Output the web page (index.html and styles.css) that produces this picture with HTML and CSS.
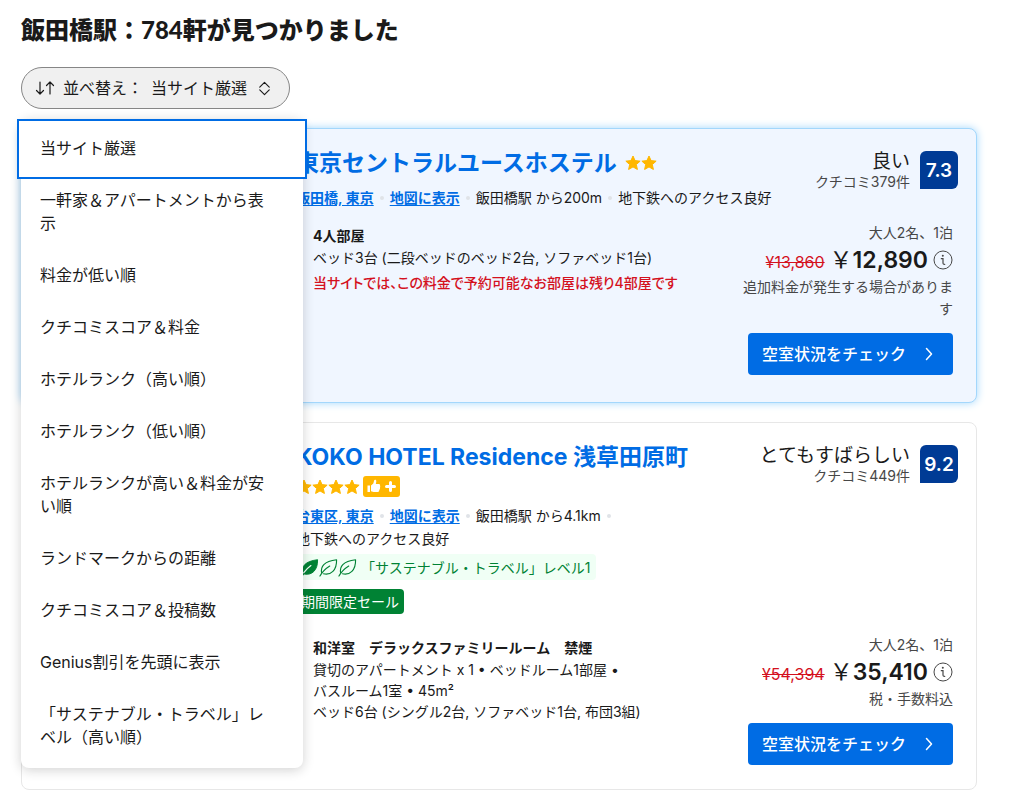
FILE: index.html
```html
<!DOCTYPE html>
<html lang="ja">
<head>
<meta charset="utf-8">
<meta name="viewport" content="width=device-width, initial-scale=1">
<title>飯田橋駅の宿泊施設</title>
<link rel="stylesheet" href="styles.css">
</head>
<body>
<svg class="sprite" aria-hidden="true">
  <symbol id="star" viewBox="0 0 24 24"><path d="M12 1.5l3.1 6.9 7.6.8-5.7 5.1 1.6 7.4L12 17.9l-6.6 3.8L7 14.3 1.300 9.200l7.600-.8z" fill="#ffb700" stroke="#ffb700" stroke-width="1.500" stroke-linejoin="round"/></symbol>
  <symbol id="info" viewBox="0 0 20 20"><circle cx="10" cy="10" r="9" fill="none" stroke="#474747" stroke-width="1"/><circle cx="9.800" cy="5.800" r="1" fill="#474747"/><path d="M8.300 8.700h1.700v4.600c0 .8.600 1.100 1.700 1.100" fill="none" stroke="#474747" stroke-width="1.200" stroke-linecap="round"/></symbol>
  <symbol id="chevron" viewBox="0 0 20 20"><path d="M7.500 4.500l5 5.500-5 5.500" fill="none" stroke="currentColor" stroke-width="1.500" stroke-linecap="round" stroke-linejoin="round"/></symbol>
  <symbol id="leaf" viewBox="0 0 20 20"><path d="M2.800 15.800C1.500 9 5 3.500 18.500 1.800 18.800 13 12.500 18.300 4.800 16.600M1 19c2-3.500 5-7.200 10.300-10.500" fill="none" stroke="#008234" stroke-width="1.200" stroke-linecap="round" stroke-linejoin="round"/></symbol>
  <symbol id="leaf-full" viewBox="0 0 20 20"><path d="M2.800 15.800C1.500 9 5 3.500 18.500 1.800 18.800 13 12.500 18.300 4.800 16.900L1.500 19z" fill="#008234" stroke="#008234" stroke-width="1" stroke-linejoin="round"/><path d="M4 15.500c2-2.800 4-5 7.500-7.500" fill="none" stroke="#f0fff5" stroke-width="1.300" stroke-linecap="round"/></symbol>
</svg>
<main class="page">
  <h1 class="heading">飯田橋駅：784軒が見つかりました</h1>

  <div class="sorter">
    <button class="sort-button" type="button" aria-haspopup="true" aria-expanded="true">
      <svg class="sort-icon" viewBox="0 0 20 20" aria-hidden="true"><path d="M5 4v12M1.500 12.500L5 16l3.500-3.500M15 16V4M11.500 7.500L15 4l3.500 3.500" fill="none" stroke="currentColor" stroke-width="1.200" stroke-linecap="round" stroke-linejoin="round"/></svg>
      <span>並べ替え：</span><span>当サイト厳選</span>
      <svg class="updown-icon" viewBox="0 0 20 20" aria-hidden="true"><path d="M5 8.500l5-5 5 5M5 11.500l5 5 5-5" fill="none" stroke="currentColor" stroke-width="1.200" stroke-linecap="round" stroke-linejoin="round"/></svg>
    </button>
    <ul class="menu">
      <li><button type="button" class="option option-active">当サイト厳選</button></li>
      <li><button type="button" class="option">一軒家＆アパートメントから表示</button></li>
      <li><button type="button" class="option">料金が低い順</button></li>
      <li><button type="button" class="option">クチコミスコア＆料金</button></li>
      <li><button type="button" class="option">ホテルランク（高い順）</button></li>
      <li><button type="button" class="option">ホテルランク（低い順）</button></li>
      <li><button type="button" class="option">ホテルランクが高い＆料金が安い順</button></li>
      <li><button type="button" class="option">ランドマークからの距離</button></li>
      <li><button type="button" class="option">クチコミスコア＆投稿数</button></li>
      <li><button type="button" class="option">Genius割引を先頭に表示</button></li>
      <li><button type="button" class="option">「サステナブル・トラベル」レベル（高い順）</button></li>
    </ul>
  </div>

  <div class="results">
    <article class="card card-featured">
      <div class="thumb"></div>
      <div class="body">
        <header class="top">
          <div class="summary">
            <div class="title-row">
              <h2 class="title"><a href="#">東京セントラルユースホステル</a></h2>
              <span class="rating"><svg class="star"><use href="#star"/></svg><svg class="star"><use href="#star"/></svg></span>
            </div>
            <ul class="facts">
              <li><a href="#">飯田橋, 東京</a></li>
              <li><a href="#">地図に表示</a></li>
              <li>飯田橋駅 から200m</li>
              <li>地下鉄へのアクセス良好</li>
            </ul>
          </div>
          <div class="score">
            <div class="score-text"><span class="score-word">良い</span><span class="reviews">クチコミ379件</span></div>
            <span class="score-badge">7.3</span>
          </div>
        </header>
        <div class="offer">
          <div class="room">
            <h3 class="room-name">4人部屋</h3>
            <p>ベッド3台 (二段ベッドのベッド2台, ソファベッド1台)</p>
            <p class="scarce">当サイトでは、この料金で予約可能なお部屋は残り4部屋です</p>
          </div>
          <div class="pricing">
            <p class="note">大人2名、1泊</p>
            <p class="price-row"><del class="old">¥13,860</del><span class="price"><span class="yen">￥</span>12,890</span><svg class="info"><use href="#info"/></svg></p>
            <p class="note">追加料金が発生する場合があります</p>
            <a class="cta" href="#">空室状況をチェック<svg class="chevron"><use href="#chevron"/></svg></a>
          </div>
        </div>
      </div>
    </article>

    <article class="card">
      <div class="thumb"></div>
      <div class="body">
        <header class="top">
          <div class="summary">
            <div class="title-row">
              <h2 class="title"><a href="#">KOKO HOTEL Residence 浅草田原町</a></h2>
              <span class="rating"><svg class="star"><use href="#star"/></svg><svg class="star"><use href="#star"/></svg><svg class="star"><use href="#star"/></svg><svg class="star"><use href="#star"/></svg>
                <span class="preferred"><svg viewBox="0 0 37 21" aria-hidden="true"><path d="M4.500 9.500h2.500v6.500H4.500zM8 9.600l2.300-2 .9-3.300c.3-.9 2-.6 2.100.6.1 1-.3 2.200-.5 3.100h3c1.200 0 1.600 1 1.200 1.900.4.500.4 1.200 0 1.700.2.600.1 1.200-.4 1.600.1.600-.1 1-.5 1.300-.1 1-.7 1.500-1.700 1.500h-3.700L8 15.300z" fill="#fff"/><path d="M27.500 6.500v8M23.500 10.500h8" stroke="#fff" stroke-width="3" stroke-linecap="round"/></svg></span>
              </span>
            </div>
            <ul class="facts">
              <li><a href="#">台東区, 東京</a></li>
              <li><a href="#">地図に表示</a></li>
              <li>飯田橋駅 から4.1km</li>
              <li>地下鉄へのアクセス良好</li>
            </ul>
            <div class="eco"><span class="leaves"><svg><use href="#leaf-full"/></svg><svg><use href="#leaf"/></svg><svg><use href="#leaf"/></svg></span><span>「サステナブル・トラベル」レベル1</span></div>
            <div class="sale">期間限定セール</div>
          </div>
          <div class="score">
            <div class="score-text"><span class="score-word">とてもすばらしい</span><span class="reviews">クチコミ449件</span></div>
            <span class="score-badge">9.2</span>
          </div>
        </header>
        <div class="offer">
          <div class="room">
            <h3 class="room-name">和洋室　デラックスファミリールーム　禁煙</h3>
            <p>貸切のアパートメント x 1 • ベッドルーム1部屋 •<br>バスルーム1室 • 45m²</p>
            <p>ベッド6台 (シングル2台, ソファベッド1台, 布団3組)</p>
          </div>
          <div class="pricing">
            <p class="note">大人2名、1泊</p>
            <p class="price-row"><del class="old">¥54,394</del><span class="price"><span class="yen">￥</span>35,410</span><svg class="info"><use href="#info"/></svg></p>
            <p class="note">税・手数料込</p>
            <a class="cta" href="#">空室状況をチェック<svg class="chevron"><use href="#chevron"/></svg></a>
          </div>
        </div>
      </div>
    </article>
  </div>
</main>
</body>
</html>
```
FILE: styles.css
```css
* { box-sizing: border-box; }
body {
  margin: 0;
  background: #fff;
  color: #1a1a1a;
  font: 14px/21px Inter, "Noto Sans CJK JP", sans-serif;
}
h1, h2, h3, p, ul { margin: 0; padding: 0; }
ul { list-style: none; }
svg { display: block; flex: none; }
button { font: inherit; color: inherit; }
.sprite { position: absolute; width: 0; height: 0; }

.page { padding: 14px 47px 14px 21px; }
.heading { font: 900 24px/32px Lato, "Noto Sans CJK JP", sans-serif; }

/* Sort control and its menu */
.sorter { position: relative; z-index: 2; display: flex; margin-top: 21px; }
.sort-button {
  display: flex;
  align-items: center;
  gap: 8px;
  height: 42px;
  padding: 0 15px 0 13px;
  border: 1px solid #868686;
  border-radius: 21px;
  background: #f0f0f0;
  font-size: 16px;
}
.sort-icon { width: 20px; height: 20px; }
.updown-icon { width: 19px; height: 19px; }
.menu {
  position: absolute;
  top: 100%;
  left: 0;
  width: 282px;
  margin-top: 10px;
  padding: 4px 0;
  border-radius: 8px;
  background: #fff;
  box-shadow: 0 2px 12px rgba(26, 26, 26, 0.2);
}
.option {
  display: block;
  width: 100%;
  padding: 14px 32px 15px 19px;
  border: 0;
  background: transparent;
  font-size: 16px;
  line-height: 23px;
  text-align: left;
}
.option-active {
  background: #fff;
  box-shadow: 0 0 0 2px #fff, 0 0 0 4px #006ce4;
}

/* Result cards */
.results { display: grid; gap: 19px; margin-top: 19px; }
.card {
  display: grid;
  grid-template-columns: 240px 1fr;
  gap: 18px;
  padding: 18px 18px 24px 16px;
  border: 1px solid #e7e7e7;
  border-radius: 8px;
}
.card-featured {
  border-color: #a3d7fc;
  background: #f0f6ff;
  box-shadow: 0 0 8px #a3d7fc;
}
.thumb { height: 231px; border-radius: 8px; background: #d9d9d9; }
.top { display: flex; gap: 12px; }
.summary { flex: 1; min-width: 0; }
.title-row { display: flex; flex-wrap: wrap; align-items: center; gap: 3px 8px; }
.title { font-size: 23px; line-height: 32px; font-weight: 700; }
.title a { color: #006ce4; text-decoration: none; }
.rating { display: flex; align-items: center; }
.star { width: 16px; height: 16px; }
.preferred { width: 37px; height: 21px; margin-left: 3px; border-radius: 3px; background: #ffb700; }

.facts { display: flex; flex-wrap: wrap; margin-top: 7px; line-height: 23px; }
.facts li { display: flex; align-items: center; white-space: nowrap; }
.facts li:not(:last-child)::after {
  content: "";
  width: 4px;
  height: 4px;
  margin: 0 6px;
  border-radius: 50%;
  background: #e0e3e8;
}
.facts a { color: #006ce4; font-weight: 600; text-underline-offset: 2px; }

.eco {
  display: flex;
  align-items: center;
  gap: 4px;
  width: fit-content;
  height: 26px;
  margin-top: 4px;
  padding: 0 6px 0 4px;
  border-radius: 4px;
  background: #f0fff5;
  color: #008234;
}
.leaves { display: flex; }
.leaves svg { width: 19px; height: 19px; }
.sale {
  width: fit-content;
  margin: 9px 0 7px;
  padding: 2px 5px;
  border-radius: 4px;
  background: #008234;
  color: #fff;
}

.score { display: flex; gap: 10px; padding-top: 4px; }
.score-text { display: flex; flex-direction: column; text-align: right; }
.score-word { font-size: 19px; line-height: 22px; }
.reviews { line-height: 18px; color: #474747; }
.score-badge {
  display: grid;
  place-items: center;
  width: 38px;
  height: 38px;
  border-radius: 6px 6px 6px 0;
  background: #003b95;
  color: #fff;
  font-size: 19px;
  font-weight: 600;
}

.offer { display: flex; justify-content: space-between; gap: 16px; margin-top: 13px; }
.room { padding: 3px 0 0 16px; border-left: 1px solid #e7e7e7; }
.room-name { margin-bottom: 1px; font-size: 14px; line-height: 21px; font-weight: 700; }
.scarce { margin-top: 4px; color: #d4111e; font-weight: 500; font-feature-settings: "palt"; }
.pricing {
  display: flex;
  flex-direction: column;
  align-items: flex-end;
  width: 219px;
  padding-right: 5px;
  text-align: right;
}
.note { color: #474747; line-height: 22px; }
.price-row { display: flex; align-items: center; gap: 5px; height: 32px; white-space: nowrap; }
.old { color: #d4111e; font-size: 16px; padding-top: 4px; }
.price { font-size: 23px; line-height: 32px; font-weight: 600; }
.yen { font-weight: 400; }
.info { width: 20px; height: 20px; }
.cta {
  display: flex;
  align-items: center;
  gap: 13px;
  height: 42px;
  margin-top: 13px;
  padding: 0 14px;
  border-radius: 4px;
  background: #006ce4;
  color: #fff;
  font-size: 16px;
  font-weight: 500;
  text-decoration: none;
  white-space: nowrap;
}
.chevron { width: 20px; height: 20px; }
```
